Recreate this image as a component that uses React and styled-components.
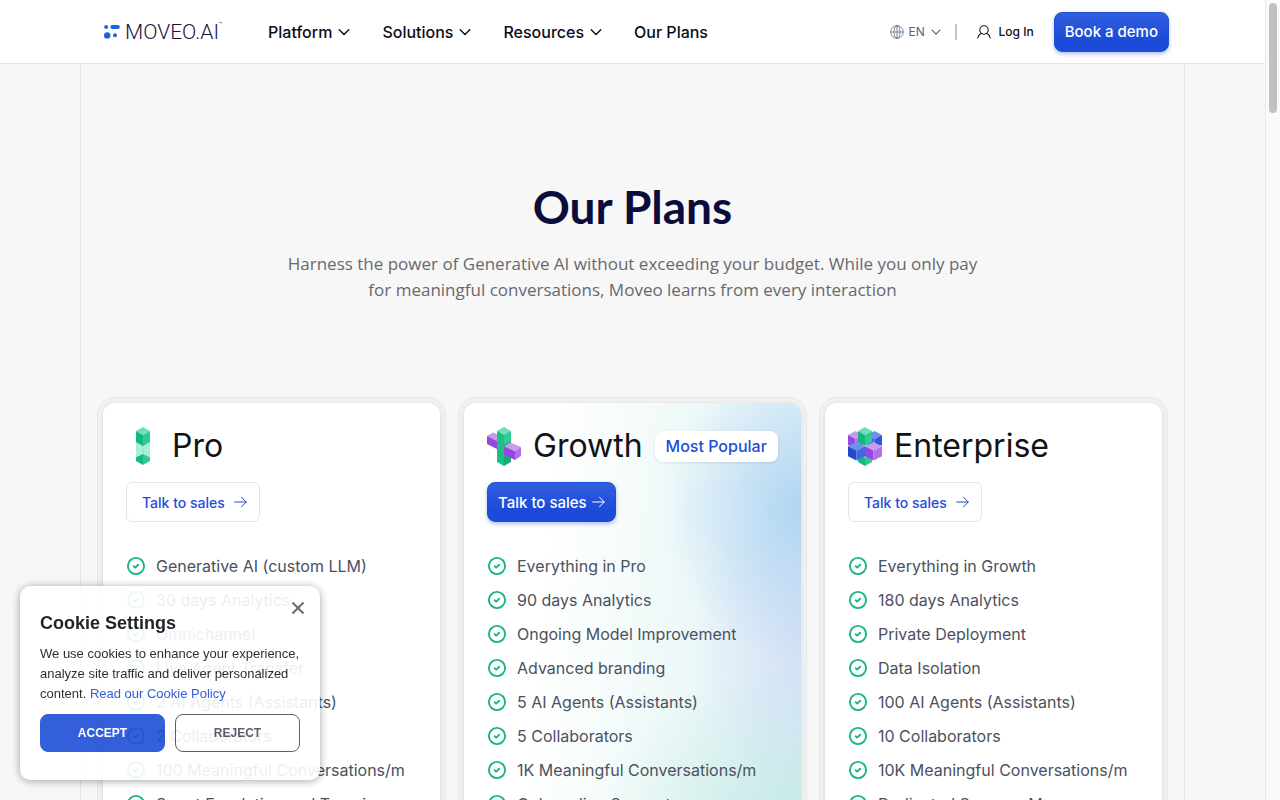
import React from "react";
import styled, { createGlobalStyle, css } from "styled-components";

const plans = [
  {
    name: "Pro",
    icon: "pro",
    features: [
      "Generative AI (custom LLM)",
      "30 days Analytics",
      "Omnichannel",
      "Live Agent Transfer",
      "2 AI Agents (Assistants)",
      "2 Collaborators",
      "100 Meaningful Conversations/m",
      "Smart Escalation and Transi",
    ],
  },
  {
    name: "Growth",
    icon: "growth",
    popular: true,
    features: [
      "Everything in Pro",
      "90 days Analytics",
      "Ongoing Model Improvement",
      "Advanced branding",
      "5 AI Agents (Assistants)",
      "5 Collaborators",
      "1K Meaningful Conversations/m",
      "Onboarding Support",
    ],
  },
  {
    name: "Enterprise",
    icon: "enterprise",
    features: [
      "Everything in Growth",
      "180 days Analytics",
      "Private Deployment",
      "Data Isolation",
      "100 AI Agents (Assistants)",
      "10 Collaborators",
      "10K Meaningful Conversations/m",
      "Dedicated Success Manager",
    ],
  },
];

const green = ["#6ee0b8", "#14b780", "#2fca96"];
const purple = ["#c89bea", "#9747e0", "#b36fea"];
const blue = ["#6f92e8", "#1f49cf", "#4169e6"];

const App = () => {
  return (
    <Page>
      <GlobalStyle />
      <Header>
        <HeaderInner>
          <Logo href="#home" aria-label="Moveo.AI">
            <LogoMark />
            <LogoText>MOVEO.AI</LogoText>
            <TradeMark>™</TradeMark>
          </Logo>
          <Nav>
            <NavButton type="button">Platform <Chevron size={12} /></NavButton>
            <NavButton type="button">Solutions <Chevron size={12} /></NavButton>
            <NavButton type="button">Resources <Chevron size={12} /></NavButton>
            <NavLink href="#plans">Our Plans</NavLink>
          </Nav>
          <Actions>
            <Language>
              <Globe />
              <select aria-label="Language" defaultValue="EN">
                <option value="EN">EN</option>
              </select>
              <Chevron size={10} />
            </Language>
            <Divider />
            <LogIn href="#login">
              <UserIcon />
              Log In
            </LogIn>
            <PrimaryButton type="button">Book a demo</PrimaryButton>
          </Actions>
        </HeaderInner>
      </Header>
      <Main id="plans">
        <Hero>
          <h1>Our Plans</h1>
          <p>
            Harness the power of Generative AI without exceeding your budget. While you only pay
            for meaningful conversations, Moveo learns from every interaction
          </p>
        </Hero>
        <Plans>
          {plans.map((plan) => (
            <Card key={plan.name}>
              <CardBody $popular={plan.popular}>
                <CardHead>
                  <PlanIcon kind={plan.icon} />
                  <h2>{plan.name}</h2>
                  {plan.popular && <Badge>Most Popular</Badge>}
                </CardHead>
                {plan.popular ? (
                  <PrimaryButton type="button">Talk to sales <Arrow /></PrimaryButton>
                ) : (
                  <OutlineButton type="button">Talk to sales <Arrow /></OutlineButton>
                )}
                <Features>
                  {plan.features.map((feature) => (
                    <li key={feature}>
                      <Check />
                      {feature}
                    </li>
                  ))}
                </Features>
              </CardBody>
            </Card>
          ))}
        </Plans>
      </Main>
      <Cookies aria-label="Cookie Settings">
        <CloseButton type="button" aria-label="Close">
          <svg width="12" height="12" viewBox="0 0 12 12" stroke="currentColor" strokeWidth="2">
            <path d="M.5 .5l11 11M11.5 .5l-11 11" />
          </svg>
        </CloseButton>
        <h3>Cookie Settings</h3>
        <p>
          We use cookies to enhance your experience, analyze site traffic and deliver personalized
          content. <a href="#policy">Read our Cookie Policy</a>
        </p>
        <CookieButtons>
          <CookieButton type="button" $accept>ACCEPT</CookieButton>
          <CookieButton type="button">REJECT</CookieButton>
        </CookieButtons>
      </Cookies>
      <ScrollTrack>
        <ScrollThumb />
      </ScrollTrack>
    </Page>
  );
};

const LogoMark = () => (
  <svg width="16" height="16" viewBox="0 0 16 16" fill="#1f63d6">
    <circle cx="2.1" cy="3" r="2" />
    <rect x="6.4" y="0.9" width="9.4" height="4.2" rx="2.1" />
    <circle cx="3.2" cy="11.4" r="3.2" />
    <circle cx="11" cy="11.2" r="2" />
  </svg>
);

const Chevron = ({ size }) => (
  <svg width={size} height={size} viewBox="0 0 12 12" fill="none" stroke="currentColor" strokeWidth="1.4" strokeLinecap="round" strokeLinejoin="round">
    <path d="M1.2 3.8L6 8.6l4.8-4.8" />
  </svg>
);

const Globe = () => (
  <svg width="14" height="14" viewBox="0 0 14 14" fill="none" stroke="currentColor" strokeWidth=".8">
    <circle cx="7" cy="7" r="6.3" />
    <ellipse cx="7" cy="7" rx="3" ry="6.3" />
    <path d="M.7 7h12.6M7 .7v12.6" />
  </svg>
);

const UserIcon = () => (
  <svg width="14" height="14" viewBox="0 0 14 14" fill="none" stroke="currentColor" strokeWidth="1.1" strokeLinecap="round">
    <circle cx="7" cy="5" r="4.2" />
    <path d="M.8 13c.5-2.200 1.900-3.800 3.700-4.700M13.200 13c-.5-2.200-1.900-3.800-3.700-4.700" />
  </svg>
);

const Arrow = () => (
  <svg width="13" height="12" viewBox="0 0 13 12" fill="none" stroke="currentColor" strokeLinecap="round" strokeLinejoin="round">
    <path d="M.7 6h11.5M7.500 1.200L12.200 6l-4.700 4.800" />
  </svg>
);

const Check = () => (
  <svg width="20" height="20" viewBox="0 0 20 20" fill="none" stroke="#1bb583" strokeWidth="1.9" strokeLinecap="round" strokeLinejoin="round">
    <circle cx="10" cy="10" r="8.1" />
    <path d="M7.700 10.200l1.500 1.400 3-2.900" />
  </svg>
);

/* isometric block: top face, left face, right face */
const Block = ({ x, y, w, d, h, colors }) => (
  <g>
    <path fill={colors[0]} d={`M${x} ${y}l${w} ${d}l${-w} ${d}l${-w} ${-d}z`} />
    <path fill={colors[1]} d={`M${x - w} ${y + d}l${w} ${d}v${h}l${-w} ${-d}z`} />
    <path fill={colors[2]} d={`M${x + w} ${y + d}l${-w} ${d}v${h}l${w} ${-d}z`} />
  </g>
);

const PlanIcon = ({ kind }) => (
  <svg width="34" height="40" viewBox="0 0 34 40">
    {kind === "pro" && (
      <>
        <path fill="#a9f0d5" d="M10 16h14v16l-7 4-7-4z" />
        <path stroke="#8be5c3" d="M17 20v8" />
        <Block x={17} y={1} w={7} d={4} h={11} colors={green} />
        <path fill="#14b780" d="M17 28v11l-7-4v-3.500z" />
        <path fill="#2fca96" d="M17 28v11l7-4v-3.500z" />
      </>
    )}
    {kind === "growth" && (
      <>
        <path fill="#c89bea" d="M0 10l6-3.500 5 2.500v6.500z" />
        <path fill="#9747e0" d="M0 10l11 5.500v8L0 18z" />
        <path fill="#1fbd89" d="M10 5l7 4v31l-7-4z" />
        <path fill="#19ab79" d="M24 5l-7 4v31l7-4z" />
        <Block x={17} y={1} w={7} d={4} h={10} colors={["#6ee0b8", "#1fbd89", "#2fca96"]} />
        <path fill="#9747e0" d="M17 20.500l11 4.500v9L17 28.500z" />
        <path fill="#c89bea" d="M17 20.500l6.500-4L34 21l-6 4z" />
        <path fill="#b36fea" d="M34 21v9l-6 4v-9z" />
      </>
    )}
    {kind === "enterprise" && (
      <>
        <Block x={7.5} y={5} w={7.5} d={4} h={10} colors={purple} />
        <Block x={26.5} y={5} w={7.5} d={4} h={10} colors={["#6f92e8", "#4169e6", "#2f59dc"]} />
        <Block x={17} y={24} w={7} d={4} h={8} colors={green} />
        <Block x={8.5} y={16} w={8.5} d={4.3} h={10} colors={blue} />
        <Block x={25.5} y={16} w={8.5} d={4.3} h={10} colors={purple} />
        <Block x={17} y={1} w={7} d={4} h={11} colors={green} />
      </>
    )}
  </svg>
);

const GlobalStyle = createGlobalStyle`
  * {
    box-sizing: border-box;
  }
  html {
    scrollbar-width: none;
  }
  body {
    margin: 0;
    background: #f7f7f7;
    font-family: Inter, sans-serif;
    color: #0b0d1a;
  }
  h1, h2, h3, p, ul {
    margin: 0;
    padding: 0;
  }
  button, select {
    font-family: inherit;
    cursor: pointer;
  }
  a {
    color: inherit;
    text-decoration: none;
  }
`;

const Page = styled.div`
  padding-right: 15px;
`;

const Header = styled.header`
  position: sticky;
  top: 0;
  z-index: 2;
  background: #fff;
  border-bottom: 1px solid #e5e5e5;
`;

const HeaderInner = styled.div`
  display: flex;
  align-items: center;
  max-width: 1105px;
  height: 63px;
  margin: 0 auto;
  padding: 0 16px 0 24px;
`;

const Logo = styled.a`
  display: flex;
  align-items: center;
  color: #17123f;
`;

const LogoText = styled.span`
  margin-left: 5px;
  font: 300 21px/24px Roboto, sans-serif;
`;

const TradeMark = styled.span`
  align-self: flex-start;
  font-size: 5px;
  line-height: 8px;
`;

const Nav = styled.nav`
  display: flex;
  align-items: center;
  gap: 32px;
  margin-left: 46px;
`;

const navText = css`
  font-size: 16px;
  font-weight: 500;
  line-height: 24px;
  color: #0b0d1a;
`;

const NavButton = styled.button`
  ${navText}
  display: flex;
  align-items: center;
  gap: 6px;
  padding: 0;
  border: 0;
  background: none;
`;

const NavLink = styled.a`
  ${navText}
`;

const Actions = styled.div`
  display: flex;
  align-items: center;
  margin-left: auto;
`;

const Language = styled.label`
  display: flex;
  align-items: center;
  gap: 5px;
  color: #5d6472;
  select {
    appearance: none;
    padding: 0;
    border: 0;
    background: none;
    font-size: 12px;
    color: inherit;
  }
`;

const Divider = styled.span`
  width: 2px;
  height: 16px;
  margin: 0 20px 0 14px;
  background: #c6c6c6;
`;

const LogIn = styled.a`
  display: flex;
  align-items: center;
  gap: 8px;
  margin-right: 20px;
  font-size: 12px;
  font-weight: 500;
`;

const PrimaryButton = styled.button`
  display: inline-flex;
  align-items: center;
  gap: 5px;
  height: 40px;
  padding: 0 10px;
  border: 1px solid #1f4fd0;
  border-radius: 8px;
  background: linear-gradient(180deg, #325fe0 0%, #1b4bd8 70%);
  box-shadow: 0 2px 4px rgba(29, 78, 216, 0.35);
  font-size: 15px;
  font-weight: 500;
  color: #fff;
`;

const OutlineButton = styled.button`
  display: inline-flex;
  align-items: center;
  gap: 9px;
  height: 40px;
  padding: 0 12px 0 15px;
  border: 1px solid #e3e5e9;
  border-radius: 6px;
  background: #fff;
  font-size: 14px;
  font-weight: 500;
  color: #1d4ed8;
`;

const Main = styled.main`
  max-width: 1105px;
  margin: 0 auto;
  padding: 0 16px 64px;
  border: solid #e5e5e5;
  border-width: 0 1px;
`;

const Hero = styled.section`
  display: flex;
  flex-direction: column;
  align-items: center;
  gap: 16px;
  padding: 115px 0 94px;
  text-align: center;
  h1 {
    font: 700 46px/56px Lato, sans-serif;
    color: #0a0c3a;
  }
  p {
    max-width: 700px;
    font: 400 17px/26px "Open Sans", sans-serif;
    color: #68686c;
  }
`;

const Plans = styled.section`
  display: grid;
  grid-template-columns: repeat(3, 1fr);
  gap: 12px;
`;

const Card = styled.article`
  padding: 5px;
  border: 1px solid #e6e7e8;
  border-radius: 18px;
  background: #f1f1f1;
`;

const CardBody = styled.div`
  height: 100%;
  padding: 23px;
  border-radius: 12px;
  background: #fff;
  box-shadow: 0 1px 4px rgba(0, 0, 0, 0.1);
  white-space: nowrap;
  overflow: hidden;
  ${(props) =>
    props.$popular &&
    css`
      background:
        radial-gradient(140px 150px at 100% 105px, rgba(164, 206, 240, 0.8), rgba(164, 206, 240, 0)),
        radial-gradient(110px 150px at 100% 240px, rgba(196, 208, 242, 0.5), rgba(196, 208, 242, 0)),
        radial-gradient(200px 150px at 100% 410px, rgba(186, 232, 222, 0.7), rgba(186, 232, 222, 0)),
        linear-gradient(95deg, #fff 25%, #f1faf9 55%, #dfeff8 100%);
    `}
`;

const CardHead = styled.div`
  display: flex;
  align-items: center;
  height: 40px;
  margin-bottom: 16px;
  h2 {
    margin-left: 12px;
    font-size: 32px;
    font-weight: 400;
    line-height: 40px;
    color: #121317;
  }
`;

const Badge = styled.span`
  margin-left: 12px;
  padding: 0 11px;
  border-radius: 8px;
  background: #fff;
  box-shadow: 0 1px 3px rgba(0, 0, 0, 0.1);
  font-size: 16px;
  font-weight: 500;
  line-height: 31px;
  color: #1d4ed8;
`;

const Features = styled.ul`
  display: flex;
  flex-direction: column;
  gap: 10px;
  margin-top: 32px;
  list-style: none;
  li {
    display: flex;
    align-items: center;
    gap: 10px;
    font-size: 16px;
    line-height: 24px;
    color: #4b5160;
  }
`;

const Cookies = styled.aside`
  position: fixed;
  left: 20px;
  bottom: 20px;
  z-index: 3;
  width: 300px;
  padding: 26px 20px 28px;
  border-radius: 10px;
  background: #fff;
  box-shadow: 0 1px 8px rgba(0, 0, 0, 0.4);
  opacity: 0.9;
  font-family: "Liberation Sans", sans-serif;
  h3 {
    font-size: 18px;
    line-height: 22px;
    color: #0a0a14;
  }
  p {
    margin: 10px 0;
    font-size: 13px;
    line-height: 20px;
    color: #14141c;
  }
  a {
    color: #1d4ed8;
  }
`;

const CloseButton = styled.button`
  position: absolute;
  top: 16px;
  right: 16px;
  display: flex;
  padding: 0;
  border: 0;
  background: none;
  color: #5c5c5c;
`;

const CookieButtons = styled.div`
  display: grid;
  grid-template-columns: 1fr 1fr;
  gap: 10px;
`;

const CookieButton = styled.button`
  height: 38px;
  border: 1px solid ${(props) => (props.$accept ? "#1d4ed8" : "#4b5160")};
  border-radius: 8px;
  background: ${(props) => (props.$accept ? "#1d4ed8" : "transparent")};
  font-size: 12px;
  font-weight: 700;
  color: ${(props) => (props.$accept ? "#fff" : "#4b5160")};
`;

const ScrollTrack = styled.div`
  position: fixed;
  top: 0;
  right: 0;
  bottom: 0;
  z-index: 4;
  width: 15px;
  padding: 3px;
  border-left: 1px solid #e8e8e8;
  background: #fafafa;
`;

const ScrollThumb = styled.div`
  width: 8px;
  height: 110px;
  border-radius: 4px;
  background: #c1c1c1;
`;

export default App;
